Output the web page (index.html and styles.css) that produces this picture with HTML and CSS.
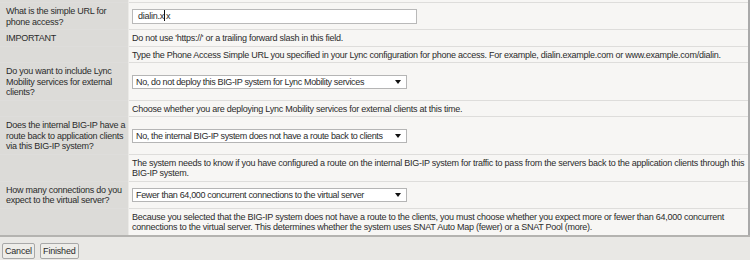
FILE: index.html
```html
<!DOCTYPE html>
<html lang="en">
<head>
    <meta charset="UTF-8">
    <title>Lync Configuration</title>
    <link rel="stylesheet" href="styles.css">
</head>
<body>
    <table class="config">
        <tr class="clip">
            <td class="label"></td>
            <td class="note"></td>
        </tr>
        <tr>
            <td class="label">What is the simple URL for phone access?</td>
            <td class="field">
                <div class="url-box" role="textbox">dialin.x<span class="caret"></span>x</div>
            </td>
        </tr>
        <tr>
            <td class="label">IMPORTANT</td>
            <td class="note">Do not use 'https://' or a trailing forward slash in this field.</td>
        </tr>
        <tr>
            <td class="label"></td>
            <td class="note">Type the Phone Access Simple URL you specified in your Lync configuration for phone access. For example, dialin.example.com or www.example.com/dialin.</td>
        </tr>
        <tr>
            <td class="label">Do you want to include Lync Mobility services for external clients?</td>
            <td class="field">
                <span class="select-wrap">
                    <select class="choice">
                        <option>No, do not deploy this BIG-IP system for Lync Mobility services</option>
                    </select>
                </span>
            </td>
        </tr>
        <tr>
            <td class="label"></td>
            <td class="note">Choose whether you are deploying Lync Mobility services for external clients at this time.</td>
        </tr>
        <tr>
            <td class="label">Does the internal BIG-IP have a route back to application clients via this BIG-IP system?</td>
            <td class="field">
                <span class="select-wrap">
                    <select class="choice">
                        <option>No, the internal BIG-IP system does not have a route back to clients</option>
                    </select>
                </span>
            </td>
        </tr>
        <tr>
            <td class="label"></td>
            <td class="note">The system needs to know if you have configured a route on the internal BIG-IP system for traffic to pass from the servers back to the application clients through this BIG-IP system.</td>
        </tr>
        <tr>
            <td class="label">How many connections do you expect to the virtual server?</td>
            <td class="field">
                <span class="select-wrap">
                    <select class="choice">
                        <option>Fewer than 64,000 concurrent connections to the virtual server</option>
                    </select>
                </span>
            </td>
        </tr>
        <tr>
            <td class="label"></td>
            <td class="note">Because you selected that the BIG-IP system does not have a route to the clients, you must choose whether you expect more or fewer than 64,000 concurrent connections to the virtual server. This determines whether the system uses SNAT Auto Map (fewer) or a SNAT Pool (more).</td>
        </tr>
    </table>
    <div class="actions">
        <button type="button" class="btn">Cancel</button>
        <button type="button" class="btn">Finished</button>
    </div>
</body>
</html>
```

FILE: styles.css
```css
body {
    font-family: "Liberation Sans", Arial, sans-serif;
    font-size: 9px;
    letter-spacing: -0.25px;
    color: #2b2b2b;
    margin: 0;
    padding: 0;
    background-color: #e9e8e5;
}
.config {
    width: 750px;
    border-collapse: collapse;
    border-right: 2px solid #a9a9a9;
    border-bottom: 2px solid #b4b3b0;
}
.config td {
    line-height: 10.5px;
    vertical-align: middle;
    border-top: 1px solid #dedddb;
}
.config .clip td {
    height: 2px;
    padding: 0;
    border-top: none;
}
.label {
    width: 120px;
    padding: 3px 2px 2px 6px;
    background-color: #dcdbd8;
    border-right: 1px solid #ebeae7;
}
.note,
.field {
    padding: 3px 1px 2px 3px;
    background-color: #f7f6f4;
}
.url-box {
    width: 285px;
    height: 15px;
    line-height: 13px;
    padding: 0 5px;
    box-sizing: border-box;
    border: 1px solid #b9b9b9;
    background-color: #fff;
}
.caret {
    display: inline-block;
    width: 1px;
    height: 11px;
    margin: 0 1px 0 0;
    vertical-align: -2px;
    background-color: #111;
}
.select-wrap {
    position: relative;
    display: inline-block;
}
.select-wrap::after {
    content: "";
    position: absolute;
    right: 6px;
    top: 5px;
    border-left: 3px solid transparent;
    border-right: 3px solid transparent;
    border-top: 4px solid #111;
    pointer-events: none;
}
.choice {
    display: block;
    width: 275px;
    height: 14px;
    margin: 0;
    padding: 0 0 0 3px;
    font-family: "Liberation Sans", Arial, sans-serif;
    font-size: 9px;
    letter-spacing: -0.35px;
    line-height: 12px;
    color: #2b2b2b;
    border: 1px solid #b5b5b5;
    border-radius: 0;
    background-color: #fff;
    appearance: none;
    -webkit-appearance: none;
}
.actions {
    padding: 6px 0 0 2px;
}
.btn {
    font-family: "Liberation Sans", Arial, sans-serif;
    font-size: 9px;
    letter-spacing: -0.2px;
    color: #2b2b2b;
    height: 16px;
    padding: 0 2px;
    margin: 0 3px 0 0;
    border: 1px solid #a8a8a8;
    border-radius: 2px;
    background-color: #eeede9;
}
```
